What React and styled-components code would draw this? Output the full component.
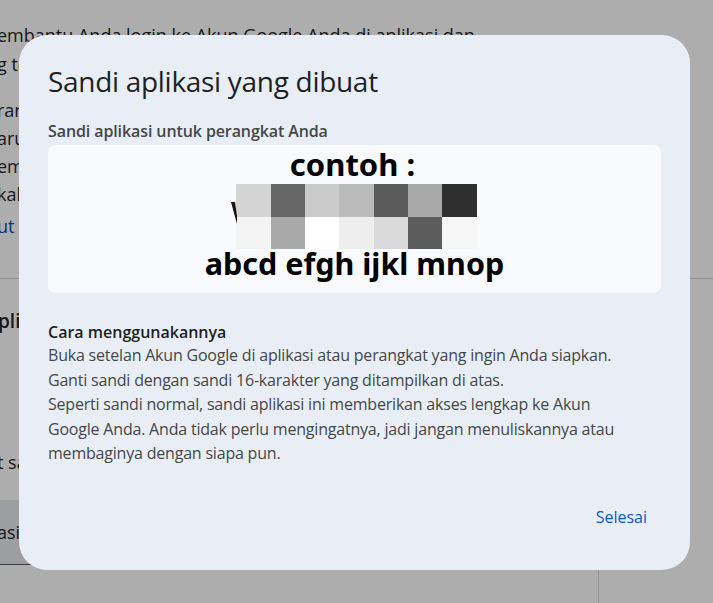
import React from 'react';
import styled, { createGlobalStyle } from 'styled-components';

const GlobalStyle = createGlobalStyle`
	html, body {
		margin: 0;
		padding: 0;
		background: #adadad;
		overflow: hidden;
	}
	body {
		font-family: "Open Sans", Roboto, "Liberation Sans", sans-serif;
	}
`;

const mosaic = [
	['#d4d4d4', '#676767', '#cbcbcb', '#bbbbbb', '#5b5b5b', '#a9a9a9', '#2f2f2f'],
	['#f3f3f3', '#a9a9a9', '#ffffff', '#eeeeee', '#dadada', '#5c5c5c', '#f6f6f6'],
];

const usage = [
	'Buka setelan Akun Google di aplikasi atau perangkat yang ingin Anda siapkan.',
	'Ganti sandi dengan sandi 16-karakter yang ditampilkan di atas.',
	'Seperti sandi normal, sandi aplikasi ini memberikan akses lengkap ke Akun',
	'Google Anda. Anda tidak perlu mengingatnya, jadi jangan menuliskannya atau',
	'membaginya dengan siapa pun.',
];

function App() {
	return (
		<>
			<GlobalStyle />
			<Page>
				<PageText top={21}>embantu Anda login ke Akun Google Anda di aplikasi dan</PageText>
				<PageText top={1}>g terlama</PageText>
				<PageText top={18}>rangkat</PageText>
				<PageText>aru</PageText>
				<PageText>em</PageText>
				<PageText>kah</PageText>
				<PageLink>ut</PageLink>
				<Divider />
				<PageHeading>plikasi</PageHeading>
				<PageText top={114}>t sandi</PageText>
				<PageField>
					<span>asi</span>
				</PageField>
				<PageColumn />
			</Page>

			{/* dialog di atas halaman */}
			<Overlay>
				<Dialog>
					<Title>Sandi aplikasi yang dibuat</Title>
					<Label>Sandi aplikasi untuk perangkat Anda</Label>
					<PasswordBox>
						<Example>contoh :</Example>
						<Mosaic>
							<Cut viewBox="0 0 6 22">
								<path d="M0 0 L4 0 L6 14 L6 22 Z" fill="#1a1208" />
							</Cut>
							{mosaic.map((row, r) =>
								row.map((c, i) => <Cell key={r + '-' + i} color={c} />)
							)}
						</Mosaic>
						<Password>abcd efgh ijkl mnop</Password>
					</PasswordBox>
					<Usage>
						<UsageTitle>Cara menggunakannya</UsageTitle>
						{usage.map((t, i) => (
							<UsageLine key={i}>{t}</UsageLine>
						))}
					</Usage>
					<Footer>
						<DoneBtn>Selesai</DoneBtn>
					</Footer>
				</Dialog>
			</Overlay>
		</>
	);
}

export default App;

const Page = styled.div`
	width: 713px;
	height: 603px;
	background: #adadad;
	display: flex;
	flex-direction: column;
	position: relative;
	overflow: hidden;
`;

const PageText = styled.div`
	margin-top: ${(p) => p.top || 0}px;
	margin-left: -3px;
	font-size: 18px;
	line-height: 28px;
	color: #161616;
	white-space: nowrap;
`;

const PageLink = styled(PageText)`
	margin-top: 4px;
	color: #07337a;
`;

const Divider = styled.div`
	margin-top: 38px;
	width: 100%;
	height: 1px;
	background: #8f8f8f;
`;

const PageHeading = styled.div`
	margin-top: 29px;
	margin-left: -2px;
	font-size: 19px;
	font-weight: 600;
	line-height: 26px;
	color: #161616;
`;

const PageField = styled.div`
	margin-top: 24px;
	width: 140px;
	height: 64px;
	background: #9c9ea2;
	border-bottom: 1px solid #3a3a3a;
	display: flex;
	align-items: center;
	span {
		margin-left: -3px;
		font-size: 18px;
		color: #161616;
	}
`;

const PageColumn = styled.div`
	position: absolute;
	left: 598px;
	top: 560px;
	width: 1px;
	height: 60px;
	background: #959595;
`;

const Overlay = styled.div`
	position: fixed;
	inset: 0;
	display: flex;
	align-items: flex-start;
	padding: 35px 0 0 19px;
	box-sizing: border-box;
`;

const Dialog = styled.div`
	width: 671px;
	height: 535px;
	background: #e9eef6;
	border-radius: 28px;
	padding: 27px 29px 0 29px;
	box-sizing: border-box;
	display: flex;
	flex-direction: column;
`;

const Title = styled.div`
	font-size: 28px;
	line-height: 38px;
	color: #1f1f1f;
	letter-spacing: -0.3px;
`;

const Label = styled.div`
	margin-top: 20px;
	font-size: 16px;
	font-weight: 600;
	line-height: 22px;
	color: #444746;
	letter-spacing: -0.1px;
`;

const PasswordBox = styled.div`
	margin-top: 3px;
	height: 148px;
	background: #f8fafd;
	border-radius: 8px;
	display: flex;
	flex-direction: column;
	align-items: center;
	padding-top: 1px;
	box-sizing: border-box;
	font-family: "Noto Sans", "Open Sans", sans-serif;
	font-weight: 700;
	color: #000;
`;

const Example = styled.div`
	font-size: 31px;
	line-height: 36px;
	margin-left: -4px;
`;

const Mosaic = styled.div`
	position: relative;
	margin-top: 2px;
	margin-left: 4px;
	display: grid;
	grid-template-columns: repeat(7, 34.4px);
	grid-template-rows: 33px 32px;
`;

const Cut = styled.svg`
	position: absolute;
	left: -5px;
	top: 18px;
	width: 6px;
	height: 22px;
`;

const Cell = styled.div`
	background: ${(p) => p.color};
`;

const Password = styled.div`
	font-size: 30.5px;
	line-height: 34px;
	margin-top: -3px;
`;

const Usage = styled.div`
	margin-top: 28px;
	color: #444746;
`;

const UsageTitle = styled.div`
	font-size: 16px;
	font-weight: 600;
	line-height: 22px;
	color: #1f1f1f;
	letter-spacing: 0;
`;

const UsageLine = styled.div`
	font-size: 16px;
	line-height: 24.5px;
	white-space: nowrap;
	letter-spacing: -0.2px;
`;

const Footer = styled.div`
	margin-top: auto;
	height: 64px;
	display: flex;
	justify-content: flex-end;
	align-items: flex-start;
`;

const DoneBtn = styled.button`
	background: none;
	border: none;
	outline: none;
	padding: 0 14px 0 0;
	font-family: "Open Sans", Roboto, sans-serif;
	font-size: 16px;
	font-weight: 500;
	color: #0b57d0;
	cursor: pointer;
`;
